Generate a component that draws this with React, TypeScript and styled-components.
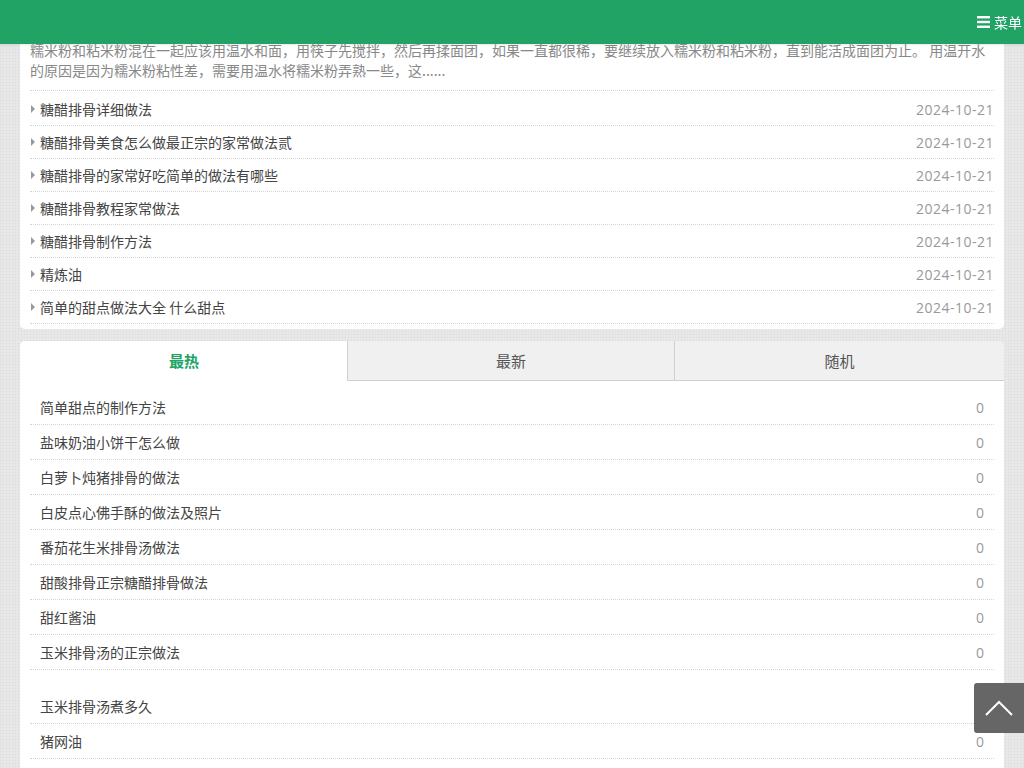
import styled, { createGlobalStyle } from 'styled-components';

const GlobalStyle = createGlobalStyle`
    * {
        box-sizing: border-box;
    }
    body {
        margin: 0;
        font-family: "Open Sans", "Noto Sans CJK SC", sans-serif;
        font-size: 14px;
        color: #444;
        background-color: #e9e9e9;
        background-image:
            repeating-linear-gradient(0deg, rgba(0, 0, 0, 0.025) 0 1px, transparent 1px 3px),
            repeating-linear-gradient(90deg, rgba(0, 0, 0, 0.025) 0 1px, transparent 1px 3px);
    }
    ul {
        list-style: none;
        margin: 0;
        padding: 0;
    }
`;

const Header = styled.header`
    position: fixed;
    top: 0;
    left: 0;
    right: 0;
    height: 44px;
    background: #21a366;
    z-index: 10;
    display: flex;
    justify-content: flex-end;
    align-items: center;
    padding-right: 2px;
    box-shadow: 0 1px 2px rgba(0, 0, 0, 0.1);
`;
const MenuButton = styled.div`
    display: flex;
    align-items: center;
    gap: 4px;
    color: #fff;
    font-size: 14px;
    font-family: "Noto Sans CJK SC", sans-serif;
`;
const Main = styled.main`
    padding: 29px 20px 0;
    display: flex;
    flex-direction: column;
    gap: 12px;
`;
const Card = styled.section`
    background: #fff;
    border-radius: 5px;
    padding: 0 10px 5px;
`;
const Intro = styled.p`
    margin: 0;
    padding: 11px 0 10px;
    line-height: 20px;
    color: #888;
    font-family: "Noto Sans CJK SC", sans-serif;
    border-bottom: 1px dotted #d6d6d6;
`;
const ArticleList = styled.ul`
    padding-top: 2px;
`;
const ArticleItem = styled.li`
    height: 33px;
    display: flex;
    align-items: center;
    border-bottom: 1px dotted #d6d6d6;
`;
const Arrow = styled.span`
    width: 0;
    height: 0;
    border-top: 4px solid transparent;
    border-bottom: 4px solid transparent;
    border-left: 4px solid #999;
    margin: 0 5px 0 1px;
`;
const ArticleTitle = styled.a`
    flex: 1;
    color: #444;
    text-decoration: none;
    font-family: "Noto Sans CJK SC", sans-serif;
`;
const ArticleDate = styled.span`
    color: #999;
    letter-spacing: 0.5px;
`;
const TabCard = styled.section`
    background: #fff;
    border-radius: 5px 5px 0 0;
    overflow: hidden;
    padding-bottom: 20px;
`;
const Tabs = styled.div`
    display: grid;
    grid-template-columns: 327px 327px 1fr;
`;
const Tab = styled.div<{ $active?: boolean }>`
    height: 40px;
    display: flex;
    align-items: center;
    justify-content: center;
    font-family: "Noto Sans CJK SC", sans-serif;
    font-size: 15px;
    color: ${(p) => (p.$active ? '#21a366' : '#555')};
    font-weight: ${(p) => (p.$active ? 'bold' : 'normal')};
    background: ${(p) => (p.$active ? '#fff' : '#f0f0f0')};
    border-bottom: 1px solid ${(p) => (p.$active ? 'transparent' : '#d0d0d0')};
    border-left: 1px solid ${(p) => (p.$active ? 'transparent' : '#d0d0d0')};
`;
const RankList = styled.ul<{ $gap?: number }>`
    padding: 0 10px;
    margin-top: ${(p) => p.$gap ?? 0}px;
`;
const RankItem = styled.li`
    height: 35px;
    display: flex;
    align-items: center;
    padding: 0 10px;
    border-bottom: 1px dotted #d6d6d6;
`;
const RankTitle = styled.span`
    flex: 1;
    font-family: "Noto Sans CJK SC", sans-serif;
    color: #444;
`;
const RankCount = styled.span`
    color: #999;
`;
const BackTop = styled.div`
    position: fixed;
    right: 0;
    top: 683px;
    width: 50px;
    height: 50px;
    background: #666;
    border-radius: 3px 0 0 3px;
    display: flex;
    align-items: center;
    justify-content: center;
    z-index: 20;
`;

const articles = [
    '糖醋排骨详细做法',
    '糖醋排骨美食怎么做最正宗的家常做法贰',
    '糖醋排骨的家常好吃简单的做法有哪些',
    '糖醋排骨教程家常做法',
    '糖醋排骨制作方法',
    '精炼油',
    '简单的甜点做法大全 什么甜点',
];
const hotFirst = [
    '简单甜点的制作方法',
    '盐味奶油小饼干怎么做',
    '白萝卜炖猪排骨的做法',
    '白皮点心佛手酥的做法及照片',
    '番茄花生米排骨汤做法',
    '甜酸排骨正宗糖醋排骨做法',
    '甜红酱油',
    '玉米排骨汤的正宗做法',
];
const hotSecond = ['玉米排骨汤煮多久', '猪网油'];

export default function App() {
    return (
        <>
            <GlobalStyle />
            <Header>
                <MenuButton>
                    <svg width="13" height="12" viewBox="0 0 13 12">
                        <rect x="0" y="0" width="13" height="2.4" fill="#fff" />
                        <rect x="0" y="4.8" width="13" height="2.4" fill="#fff" />
                        <rect x="0" y="9.6" width="13" height="2.4" fill="#fff" />
                    </svg>
                    菜单
                </MenuButton>
            </Header>
            <Main>
                <Card>
                    <Intro>
                        糯米粉和粘米粉混在一起应该用温水和面，用筷子先搅拌，然后再揉面团，如果一直都很稀，要继续放入糯米粉和粘米粉，直到能活成面团为止。 用温开水的原因是因为糯米粉粘性差，需要用温水将糯米粉弄熟一些，这......
                    </Intro>
                    <ArticleList>
                        {articles.map((title) => (
                            <ArticleItem key={title}>
                                <Arrow />
                                <ArticleTitle href="#">{title}</ArticleTitle>
                                <ArticleDate>2024-10-21</ArticleDate>
                            </ArticleItem>
                        ))}
                    </ArticleList>
                </Card>
                <TabCard>
                    <Tabs>
                        <Tab $active>最热</Tab>
                        <Tab>最新</Tab>
                        <Tab>随机</Tab>
                    </Tabs>
                    <RankList $gap={9}>
                        {hotFirst.map((title) => (
                            <RankItem key={title}>
                                <RankTitle>{title}</RankTitle>
                                <RankCount>0</RankCount>
                            </RankItem>
                        ))}
                    </RankList>
                    <RankList $gap={19}>
                        {hotSecond.map((title) => (
                            <RankItem key={title}>
                                <RankTitle>{title}</RankTitle>
                                <RankCount>0</RankCount>
                            </RankItem>
                        ))}
                    </RankList>
                </TabCard>
            </Main>
            <BackTop>
                <svg width="30" height="18" viewBox="0 0 30 18">
                    <polyline points="2,16 15,3 28,16" fill="none" stroke="#fff" strokeWidth="2" />
                </svg>
            </BackTop>
        </>
    );
}
